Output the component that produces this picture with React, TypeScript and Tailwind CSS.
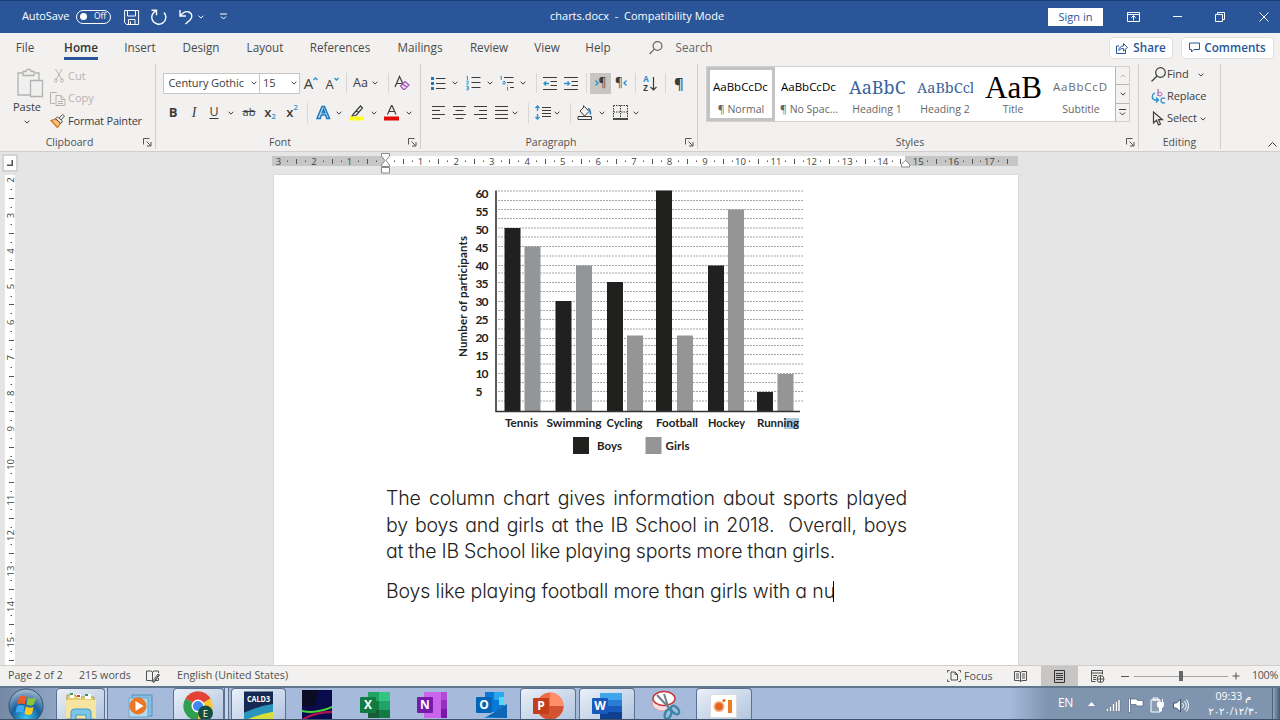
import clsx from "clsx";
import type { ReactNode } from "react";

interface IconProps {
  w?: number;
  h?: number;
  className?: string;
  children: ReactNode;
}

function Icon({ w = 16, h = 16, className, children }: IconProps) {
  return (
    <svg
      width={w}
      height={h}
      viewBox={`0 0 ${w} ${h}`}
      fill="none"
      stroke="currentColor"
      strokeWidth={1}
      className={clsx("shrink-0", className)}
    >
      {children}
    </svg>
  );
}

function Cell({ className, children }: { className: string; children: ReactNode }) {
  return (
    <span className={clsx("flex h-[21px] shrink-0 items-center justify-center", className)}>
      {children}
    </span>
  );
}

function Chevron({ className }: { className?: string }) {
  return (
    <Icon w={6} h={4} className={className}>
      <path d="M.6.7 3 3.1 5.4.7" />
    </Icon>
  );
}

function Divider({ className }: { className?: string }) {
  return (
    <span className={clsx("flex w-2 shrink-0 justify-center", className)}>
      <span className="h-5 w-px bg-[#d8d7d5]" />
    </span>
  );
}

function Launcher() {
  return (
    <Icon w={9} h={9} className="text-[#555]">
      <path d="M.5 6.5V.5h6M3.5 3.5l4 4M8 4v4H4" />
    </Icon>
  );
}

/* ---------- Title bar ---------- */

function TitleBar() {
  return (
    <header className="flex h-[33px] items-center border-t border-[#173f78] bg-[#2a5699] pb-px text-white">
      <span className="ml-[22px] w-[54px] text-[11px] tracking-[-0.1px]">AutoSave</span>
      <span className="flex h-[14px] w-[35px] items-center gap-[7px] rounded-full border border-white pl-[3px]">
        <span className="h-[7px] w-[7px] rounded-full bg-white" />
        <span className="text-[8.5px] leading-none">Off</span>
      </span>
      <Cell className="ml-[10px] w-[22px]">
        <Icon>
          <path d="M.6 1.5h14v14H2.5L.6 13.5zM3.5 1.5v5.5h8V1.5M4.5 15.5v-5h6.5v5M6.5 15.5v-3" />
        </Icon>
      </Cell>
      <Cell className="ml-[5px] w-[22px]">
        <Icon className="[stroke-width:1.4]">
          <path d="M.5 1.2h5v5M5.3 1.700A7 7 0 1 0 13 3.500" />
        </Icon>
      </Cell>
      <Cell className="ml-[5px] w-[22px]">
        <Icon className="[stroke-width:1.4]">
          <path d="M2 1v6h6M2.2 6.700C5 3.500 8 1.800 11 3c3.600 1.600 3.600 5.500 1 8l-4.500 4" />
        </Icon>
      </Cell>
      <Cell className="w-2">
        <Chevron />
      </Cell>
      <Cell className="ml-[13px] w-[10px]">
        <Icon w={7} h={7}>
          <path d="M0 1h7M1 3.5 3.5 6 6 3.5" />
        </Icon>
      </Cell>
      <span className="ml-[322px] w-[172px] text-center text-[11px] whitespace-pre">
        charts.docx  -  Compatibility Mode
      </span>
      <button className="ml-[326px] h-[18px] w-[55px] bg-white text-[11px] leading-[17px] text-[#2a5699]">
        Sign in
      </button>
      <Cell className="ml-[20px] w-5">
        <Icon w={13} h={10}>
          <path d="M.5.5h12v9H.5zM.5 2.5h12M6.5 8.5v-5M4.3 5.700l2.200-2.200 2.200 2.200" />
        </Icon>
      </Cell>
      <Cell className="ml-[24px] w-5">
        <span className="h-px w-[9px] bg-white" />
      </Cell>
      <Cell className="ml-[23px] w-5">
        <Icon w={10} h={10}>
          <path d="M.5 2.5h7v7h-7zM2.5 2.5v-2h7v7h-2" />
        </Icon>
      </Cell>
      <Cell className="ml-[24px] w-5">
        <Icon w={10} h={10}>
          <path d="m.5.5 9 9m0-9-9 9" />
        </Icon>
      </Cell>
    </header>
  );
}

/* ---------- Tabs ---------- */

const tabs = [
  { label: "File", width: "w-[50px]" },
  { label: "Home", width: "w-[62px]" },
  { label: "Insert", width: "w-[56px]" },
  { label: "Design", width: "w-[66px]" },
  { label: "Layout", width: "w-[62px]" },
  { label: "References", width: "w-[88px]" },
  { label: "Mailings", width: "w-[72px]" },
  { label: "Review", width: "w-[66px]" },
  { label: "View", width: "w-[50px]" },
  { label: "Help", width: "w-[52px]" },
];

function TabRow() {
  return (
    <nav className="flex h-[29px] items-center text-[11.7px] text-[#4a4a4a]">
      {tabs.map((tab) => (
        <span key={tab.label} className={clsx("flex shrink-0 justify-center", tab.width)}>
          <span
            className={clsx(
              "border-b-[3px] pt-[2px] leading-[20px]",
              tab.label === "Home" ? "border-[#2a5699] font-semibold text-[#333]" : "border-transparent"
            )}
          >
            {tab.label}
          </span>
        </span>
      ))}
      <Cell className="ml-4 w-8">
        <Icon w={14} h={14} className="text-[#666] [stroke-width:1.2]">
          <circle cx="8.5" cy="5" r="4.4" />
          <path d="M5.4 8.2.6 13" />
        </Icon>
      </Cell>
      <span className="w-[44px] text-center text-[#666]">Search</span>
      <button className="ml-[393px] flex h-[22px] w-[64px] items-center justify-center gap-[5px] rounded-sm border border-[#e1dfdd] bg-white font-semibold text-[#2a5699]">
        <Icon w={12} h={12}>
          <path d="M3 4H.5v7.500h9V8M2.800 8.500C3 5.500 4.800 4 7.500 4V1.500l4 4-4 3.500V6.500c-2 0-3.500.500-4.700 2z" />
        </Icon>
        Share
      </button>
      <button className="ml-[8px] flex h-[22px] w-[93px] items-center justify-center gap-[4px] rounded-sm border border-[#e1dfdd] bg-white font-semibold text-[#2a5699]">
        <Icon w={11} h={11}>
          <path d="M.5 1h10v6.500H5L2.500 10V7.500h-2z" />
        </Icon>
        Comments
      </button>
    </nav>
  );
}

/* ---------- Ribbon ---------- */

interface GroupProps {
  name: string;
  className: string;
  bodyClass?: string;
  launcher?: boolean;
  children: ReactNode;
}

function Group({ name, className, bodyClass, launcher, children }: GroupProps) {
  return (
    <section className={clsx("my-[2px] flex shrink-0 flex-col border-r border-[#cfcecc]", className)}>
      <div className={clsx("h-[73px]", bodyClass)}>{children}</div>
      <div className="flex h-[13px] items-center">
        <span className={clsx("flex-1 text-center text-[10.5px] text-[#505050]", launcher && "pr-1")}>{name}</span>
        {launcher && (
          <span className="w-3">
            <Launcher />
          </span>
        )}
      </div>
    </section>
  );
}

function ClipboardGroup() {
  return (
    <Group name="Clipboard" className="w-[156px]" launcher>
      <div className="flex">
        <div className="flex w-[54px] flex-col items-center pt-[4px] text-[11px]">
          <Icon w={28} h={31} className="ml-[5px] text-[#b2b2b2] [stroke-width:1.3]">
            <path d="M7 5H2v22h12M19 5h4v7M7 3.5h3c0-3 5-3 5 0h3v4H7zM14.500 12.500h12v16h-12z" fill="#f0f0ef" />
          </Icon>
          <span className="mt-px leading-[13px]">Paste</span>
          <Chevron className="mt-[7px]" />
        </div>
        <div className="flex flex-col pt-px text-[11px]">
          <div className="flex h-[22px] items-center text-[#b5b3b1]">
            <span className="w-[14px] shrink-0">
              <Icon w={10} h={14}>
                <path d="m1.5 0 6 10M8 0 2.5 10" />
                <circle cx="1.7" cy="11.5" r="1.5" />
                <circle cx="8" cy="11.5" r="1.5" />
              </Icon>
            </span>
            Cut
          </div>
          <div className="flex h-[23px] items-center text-[#b5b3b1]">
            <span className="-ml-[4px] w-[18px] shrink-0">
              <Icon w={16} h={14}>
                <path d="M5 11.5H.5V.5h6l1 1M6 3.5h5l4 4v6H6zM11 3.5v4h4M8 9.5h5M8 11.5h5" />
              </Icon>
            </span>
            Copy
          </div>
          <div className="flex h-[22px] items-center tracking-[-0.2px]">
            <span className="-ml-[4px] w-[18px] shrink-0">
              <Icon w={15} h={14}>
                <path d="M1 6.5 5.5 5l5 4-3 4.5z" fill="#f4c27c" stroke="#d8741a" strokeWidth="1.3" />
                <path d="m5.5 4.5 2-1.5 5 4-1.5 2.5zM9 4l3.5-3.5L14.5 2 11 6" stroke="#555" fill="#f3f2f1" />
              </Icon>
            </span>
            Format Painter
          </div>
        </div>
      </div>
    </Group>
  );
}

function FontGroup() {
  return (
    <Group name="Font" className="w-[265px]" bodyClass="pl-[7px]" launcher>
      <div className="flex h-[21px] items-center pt-[17px]">
        <Cell className="w-[97px] border border-[#c8c6c4] bg-white text-[11px]">
          <span className="w-[84px] pl-[2px] tracking-[-0.1px] whitespace-nowrap">Century Gothic</span>
          <Chevron />
        </Cell>
        <Cell className="-ml-px w-[41px] border border-[#c8c6c4] bg-white text-[11px]">
          <span className="w-[29px] pl-[1px]">15</span>
          <Chevron />
        </Cell>
        <Cell className="w-[22px]">
          <span className="text-[15px] leading-none">A</span>
          <Icon w={5} h={12} className="text-[#2b8fd0] [stroke-width:1.3]">
            <path d="M.5 3 2.5 1l2 2" />
          </Icon>
        </Cell>
        <Cell className="w-[20px]">
          <span className="mt-[2px] text-[13px] leading-none">A</span>
          <Icon w={5} h={12} className="text-[#2b8fd0] [stroke-width:1.3]">
            <path d="m.5 1 2 2 2-2" />
          </Icon>
        </Cell>
        <Divider />
        <Cell className="w-[21px] text-[12.5px]">Aa</Cell>
        <Cell className="w-[8px]">
          <Chevron />
        </Cell>
        <Divider className="ml-[5px]" />
        <Cell className="w-[20px]">
          <Icon w={16} h={16}>
            <path d="M1 12 5.500 1.500 9 9M2.800 8.500h5" strokeWidth="1.2" />
            <path d="m6.500 11 4.500-4.500 4 3.500-4.500 4.500H9.500zM8.500 9l4.500 3.500" fill="#f4e6f7" stroke="#9b4fb5" strokeWidth="1.2" />
          </Icon>
        </Cell>
      </div>
      <div className="mt-[17px] flex h-[21px] items-center">
        <Cell className="w-5 text-[13px] font-bold">B</Cell>
        <Cell className="w-[22px] font-['Liberation_Serif',serif] text-[14px] italic">I</Cell>
        <Cell className="w-[18px] text-[12.5px] underline underline-offset-2">U</Cell>
        <Cell className="w-4">
          <Chevron />
        </Cell>
        <Cell className="w-5 text-[11px] line-through">ab</Cell>
        <Cell className="w-[22px] text-[13px] font-semibold">
          x<span className="mt-[9px] text-[7.5px] font-semibold text-[#2b8fd0]">2</span>
        </Cell>
        <Cell className="w-[22px] text-[13px] font-semibold">
          x<span className="mb-[9px] text-[7.5px] font-semibold text-[#2b8fd0]">2</span>
        </Cell>
        <Divider className="w-1" />
        <Cell className="w-6">
          <Icon w={15} h={15}>
            <path
              d="M1 13.5 6 1.500h2.500l5 12h-2.700L9.600 10H5.400l-1.200 3.500zM6.300 7.700h2.400L7.500 4.500z"
              fill="#b8dcf5"
              stroke="#2079be"
              strokeWidth="1.5"
            />
          </Icon>
        </Cell>
        <Cell className="w-[7px]">
          <Chevron />
        </Cell>
        <Cell className="ml-[2px] w-[26px]">
          <Icon w={16} h={16}>
            <path d="M4 9.500 11.500 1l2 2L7 10.500l-4 .5zM7 5.500l3 2.500" strokeWidth="1.2" />
            <path d="M0 11.500h15v4H0z" fill="#ffff1e" stroke="none" />
          </Icon>
        </Cell>
        <Cell className="w-2">
          <Chevron />
        </Cell>
        <Cell className="w-7">
          <Icon w={16} h={16}>
            <path d="M3.500 9.500 7.500.5h.5l4 9M5 6.500h5.500" strokeWidth="1.2" />
            <path d="M0 11.500h15v4H0z" fill="#e00b0b" stroke="none" />
          </Icon>
        </Cell>
        <Cell className="w-[6px]">
          <Chevron />
        </Cell>
      </div>
    </Group>
  );
}

function Lines({ d }: { d: string }) {
  return (
    <Icon w={15} h={14}>
      <path d={d} />
    </Icon>
  );
}

function ParagraphGroup() {
  return (
    <Group name="Paragraph" className="w-[277px]" bodyClass="pl-[7px]" launcher>
      <div className="flex h-[21px] items-center pt-[17px]">
        <Cell className="w-[21px]">
          <Icon w={15} h={15}>
            <path d="M5 2.500h9.500M5 7.500h9.500M5 12.500h9.500" />
            <path d="M0 1h3v3H0zM0 6h3v3H0zM0 11h3v3H0z" fill="#2079be" stroke="none" />
          </Icon>
        </Cell>
        <Cell className="w-3">
          <Chevron />
        </Cell>
        <Cell className="w-6">
          <Icon w={15} h={16}>
            <path d="M5.500 2.500h9M5.500 7.500h9M5.500 12.500h9" />
            <path d="M.5 1.500h1V5M.3 6.200h2v1.300L.5 9h2M.3 11.300h2v3.500h-2M.8 13h1.500" stroke="#2b8fd0" />
          </Icon>
        </Cell>
        <Cell className="w-[10px]">
          <Chevron />
        </Cell>
        <Cell className="w-6">
          <Icon w={15} h={16}>
            <path d="M4 2.500h9.500M7 7.500h6.500M10 12.500h4" />
            <path d="M.3 1.500h1V5M3 6.500h2V9H3V7.500M7.500 10v.7M7.500 12v3.500" stroke="#2b8fd0" />
          </Icon>
        </Cell>
        <Cell className="w-2">
          <Chevron />
        </Cell>
        <Divider className="ml-[5px]" />
        <Cell className="w-5">
          <Icon w={14} h={13}>
            <path d="M0 .5h14M7.500 4.500H14M7.500 8.500H14M0 12.500h14" />
            <path d="M6 6.500H1M3 4.500l-2 2 2 2" stroke="#2b8fd0" strokeWidth="1.3" />
          </Icon>
        </Cell>
        <Cell className="w-[22px]">
          <Icon w={14} h={13}>
            <path d="M0 .5h14M7.500 4.500H14M7.500 8.500H14M0 12.500h14" />
            <path d="M0 6.500h5M3.500 4.500l2 2-2 2" stroke="#2b8fd0" strokeWidth="1.3" />
          </Icon>
        </Cell>
        <Divider />
        <Cell className="w-[21px] bg-[#c8c6c4] text-[12px]">
          <Icon w={4} h={6} className="text-[#2b8fd0] [stroke-width:1.4]">
            <path d="m.5.5 2.500 2.500L.5 5.500" />
          </Icon>
          ¶
        </Cell>
        <Cell className="w-5 text-[12px]">
          ¶
          <Icon w={4} h={6} className="text-[#2b8fd0] [stroke-width:1.4]">
            <path d="M3.500.500 1 3l2.500 2.500" />
          </Icon>
        </Cell>
        <Divider />
        <Cell className="w-[22px]">
          <span className="flex flex-col text-[8px] leading-[9px] font-bold">
            <span className="h-[9px] text-[#2b8fd0]">A</span>
            <span className="h-[9px]">Z</span>
          </span>
          <Icon w={8} h={15}>
            <path d="M4.500 1v13M1.500 11l3 3 3-3" strokeWidth="1.2" />
          </Icon>
        </Cell>
        <Divider />
        <Cell className="w-5 text-[15px] font-semibold">¶</Cell>
      </div>
      <div className="mt-[17px] flex h-[21px] items-center">
        <Cell className="w-[21px]">
          <Lines d="M1 .5h13M1 4.500h8M1 8.500h13M1 12.500h8" />
        </Cell>
        <Cell className="w-[21px]">
          <Lines d="M1 .5h13M3.500 4.500h8M1 8.500h13M3.500 12.500h8" />
        </Cell>
        <Cell className="w-[21px]">
          <Lines d="M1 .5h13M6 4.500h8M1 8.500h13M6 12.500h8" />
        </Cell>
        <Cell className="w-5">
          <Lines d="M1 .5h13M1 4.500h13M1 8.500h13M1 12.500h13" />
        </Cell>
        <Cell className="w-2">
          <Chevron />
        </Cell>
        <Divider className="ml-[5px]" />
        <Cell className="w-[22px]">
          <Icon w={16} h={15}>
            <path d="M7 2.500h9M7 5.500h9M7 8.500h9M7 11.500h9" />
            <path d="M2.500 1v5M2.500 9v5M.5 3l2-2 2 2M.5 12l2 2 2-2" stroke="#2b8fd0" strokeWidth="1.3" />
          </Icon>
        </Cell>
        <Cell className="w-[6px]">
          <Chevron />
        </Cell>
        <Divider className="ml-[6px]" />
        <Cell className="w-[22px]">
          <Icon w={16} h={16}>
            <path d="M3 6 7.500 1.500l4.500 5L7.500 11zM6.500 3V.5M1 11.500h13.500v3H1z" />
            <path d="M11 3.500c2 .5 2.500 2.500 2.500 6" stroke="#2079be" strokeWidth="1.5" />
          </Icon>
        </Cell>
        <Cell className="w-3">
          <Chevron />
        </Cell>
        <Cell className="w-6">
          <Icon w={15} h={15}>
            <path d="M.5.5h14M.5.5v13M14.500.5v13M7.500.5v13M.5 7h14" strokeDasharray="1.500 1" />
            <path d="M0 14h15" strokeWidth="1.6" stroke="#222" />
          </Icon>
        </Cell>
        <Cell className="w-2">
          <Chevron />
        </Cell>
      </div>
    </Group>
  );
}

const styles = [
  { name: "¶ Normal", sample: "AaBbCcDc", look: "text-[11.5px] text-black" },
  { name: "¶ No Spac...", sample: "AaBbCcDc", look: "text-[11.5px] text-black" },
  { name: "Heading 1", sample: "AaBbC", look: "font-['Noto_Serif','DejaVu_Serif',serif] text-[18px] text-[#3a639c]" },
  { name: "Heading 2", sample: "AaBbCcl", look: "font-['Noto_Serif','DejaVu_Serif',serif] text-[14.5px] text-[#3a639c]" },
  { name: "Title", sample: "AaB", look: "font-['Liberation_Serif',serif] text-[31px] text-black" },
  { name: "Subtitle", sample: "AaBbCcD", look: "text-[11.5px] tracking-[0.8px] text-[#6a6a6a]" },
];

function StylesGroup() {
  return (
    <Group name="Styles" className="w-[441px]" bodyClass="pl-2" launcher>
      <div className="flex h-[58px] w-[424px] pt-[2px]">
        <div className="flex flex-1 border border-[#d2d0ce] bg-white">
          {styles.map((style, i) => (
            <div
              key={style.name}
              className={clsx(
                "flex w-[68px] shrink-0 flex-col items-center border-[3px] pt-[5px]",
                i === 0 ? "border-[#c3c3c3]" : "border-transparent"
              )}
            >
              <div className="flex h-[24px] w-[56px] items-center overflow-hidden">
                <span className={clsx("leading-none whitespace-nowrap", style.look)}>{style.sample}</span>
              </div>
              <span className="mt-[4px] text-[10.5px] leading-[13px] whitespace-nowrap text-[#666]">
                {style.name}
              </span>
            </div>
          ))}
          <div className="flex flex-1 flex-col divide-y divide-[#b8b6b4] border-l border-[#b8b6b4] bg-[#f3f2f1]">
            <span className="flex flex-1 items-center justify-center text-[#b5b5b5]">
              <Chevron className="rotate-180" />
            </span>
            <span className="flex flex-1 items-center justify-center">
              <Chevron />
            </span>
            <span className="flex flex-1 items-center justify-center">
              <Icon w={7} h={7}>
                <path d="M0 .5h7M1 3.500 3.500 6 6 3.500" />
              </Icon>
            </span>
          </div>
        </div>
      </div>
    </Group>
  );
}

function EditingGroup() {
  return (
    <Group name="Editing" className="w-[82px]">
      <div className="flex flex-col text-[11px] tracking-[-0.1px]">
        <div className="flex h-[21px] items-center">
          <Cell className="ml-[10px] w-[18px]">
            <Icon w={15} h={15} className="[stroke-width:1.2]">
              <circle cx="9.500" cy="5.500" r="4.800" />
              <path d="M6 9 .5 14.500" />
            </Icon>
          </Cell>
          <span className="w-[31px]">Find</span>
          <Chevron className="mt-px" />
        </div>
        <div className="flex h-[22px] items-center">
          <Cell className="ml-[10px] w-[18px]">
            <Icon w={15} h={15}>
              <path d="M7 0v7M7 4.500c2-2.500 4.500-.5 3.800 1.200C10 7.500 8 7.300 7 6" stroke="#9b4fb5" />
              <path
                d="M14 9.500c-3-1.500-4.500.5-4 2.500s2.500 2.500 4 1.500M4 4C.5 5 .5 10 3.500 11H7M5 8.500 7.500 11 5 13.500"
                stroke="#2b8fd0"
                strokeWidth="1.3"
              />
            </Icon>
          </Cell>
          Replace
        </div>
        <div className="flex h-[22px] items-center">
          <Cell className="ml-[10px] w-[18px]">
            <Icon w={12} h={15} className="[stroke-width:1.2]">
              <path d="M1.500 1v11l3-2.700L6.500 14l2-1-2-4.300h4z" />
            </Icon>
          </Cell>
          Select
          <Chevron className="mt-px ml-[3px]" />
        </div>
      </div>
    </Group>
  );
}

function Ribbon() {
  return (
    <div className="flex h-[90px] border-b border-[#d0cfcd] text-[#3c3c3c]">
      <ClipboardGroup />
      <FontGroup />
      <ParagraphGroup />
      <StylesGroup />
      <EditingGroup />
      <div className="flex flex-1 items-end justify-end pr-[3px] pb-[4px]">
        <Icon w={9} h={5}>
          <path d="m.5 4.500 4-4 4 4" />
        </Icon>
      </div>
    </div>
  );
}

/* ---------- Rulers ---------- */

const CM = 35.55;

function HorizontalRuler() {
  const quarters = Array.from({ length: 83 }, (_, i) => i - 12);
  return (
    <svg width="746" height="22" viewBox="272 153 746 22" className="ml-[254px] shrink-0">
      <rect x="272" y="157" width="746" height="10" fill="#c6c6c6" />
      <rect x="385" y="157" width="520" height="10" fill="#fff" />
      {quarters.map((q) => {
        const x = 385 + (q * CM) / 4;
        if (q === 0 || q === 59 || x > 1016) return null;
        if (q % 4 === 0) {
          return (
            <text key={q} x={x} y="165.5" fontSize="9.5" textAnchor="middle" fill="#444">
              {Math.abs(q / 4)}
            </text>
          );
        }
        const half = q % 2 === 0;
        return <rect key={q} x={Math.round(x)} y={half ? 160 : 161.5} width="1" height={half ? 5 : 1.5} fill="#555" />;
      })}
      <path
        d="M381.500 154.500h8v2.500l-3.500 4.500 3.500 4.500v1.500h-8v-1.500l3.500-4.500-3.500-4.500zM381.500 168.500h8v5.500h-8zM901.500 168v-3l4-3.500 4 3.500v3z"
        fill="#fff"
        stroke="#888"
      />
    </svg>
  );
}

function VerticalRuler() {
  const quarters = Array.from({ length: 55 }, (_, i) => i);
  return (
    <svg width="18" height="490" viewBox="0 175 18 490" className="shrink-0">
      <rect x="5" y="175" width="10" height="490" fill="#fff" />
      {quarters.map((q) => {
        const y = 180 + (q * CM) / 4;
        if (q % 4 === 0) {
          return (
            <text key={q} transform={`translate(14 ${y}) rotate(-90)`} fontSize="9.5" textAnchor="middle" fill="#444">
              {q / 4 + 2}
            </text>
          );
        }
        const half = q % 2 === 0;
        return <rect key={q} x={half ? 9 : 10.5} y={Math.round(y)} width={half ? 5 : 1.5} height="1" fill="#555" />;
      })}
    </svg>
  );
}

/* ---------- Document ---------- */

const gridLines = [
  191, 200.5, 209.5, 218.5, 228, 237, 246.5, 256, 265.5, 273, 282.5, 291.5, 301.5, 310.5, 319.5, 329, 338.5, 345.5,
  354.5, 364, 373.5, 382.5, 391.5, 401,
];

const axisLabels = [60, 55, 50, 45, 40, 35, 30, 25, 20, 15, 10, 5];

// boys/girls hold the top left corner of each column
const sports = [
  { name: "Tennis", labelX: 505, labelW: 33, boys: [504.5, 228], girls: [524.5, 246.5] },
  { name: "Swimming", labelX: 546.5, labelW: 55, boys: [555.5, 301], girls: [576, 265.5] },
  { name: "Cycling", labelX: 606.5, labelW: 36, boys: [607, 282], girls: [627, 335.5] },
  { name: "Football", labelX: 656, labelW: 42, boys: [656, 190.5], girls: [677, 335.5] },
  { name: "Hockey", labelX: 708, labelW: 37, boys: [708, 265.5], girls: [728, 209.5] },
  { name: "Running", labelX: 757, labelW: 42, boys: [757, 392], girls: [777.5, 374] },
];

function ColumnChart() {
  return (
    <svg
      width="380"
      height="280"
      viewBox="440 180 380 280"
      fill="#222"
      className="ml-[166px] shrink-0 font-[Lato,sans-serif] font-bold"
    >
      {gridLines.map((y) => (
        <path key={y} d={`M498 ${y}H803`} stroke="#a5a5a5" strokeDasharray="2 1" strokeWidth="1" />
      ))}
      {axisLabels.map((n, i) => (
        <text key={n} x="475.5" y={198.2 + i * 18} fontSize="12" textLength={n === 5 ? 6.5 : 13}>
          {n}
        </text>
      ))}
      <text transform="translate(467 357) rotate(-90)" fontSize="11.5" textLength="121">
        Number of participants
      </text>
      <rect x="784" y="418" width="15" height="11" fill="#a9c6de" />
      {sports.map((s) => (
        <g key={s.name}>
          <rect x={s.boys[0]} y={s.boys[1]} width="16" height={411 - s.boys[1]} fill="#20201f" />
          <rect x={s.girls[0]} y={s.girls[1]} width="16" height={411 - s.girls[1]} fill="#949597" />
          <text x={s.labelX} y="427" fontSize="11.5" textLength={s.labelW} lengthAdjust="spacingAndGlyphs">
            {s.name}
          </text>
        </g>
      ))}
      <path d="M496 190.500V411.500H800" fill="none" stroke="#333" strokeWidth="1.6" />
      <rect x="573" y="437" width="16" height="17" fill="#20201f" />
      <rect x="645.5" y="437" width="16" height="17" fill="#949597" />
      <text x="597" y="450" fontSize="11.5" textLength="25">
        Boys
      </text>
      <text x="665.5" y="450" fontSize="11.5" textLength="24">
        Girls
      </text>
    </svg>
  );
}

function Line({ className, children }: { className: string; children: ReactNode }) {
  return <span className={clsx("block whitespace-pre-wrap [text-align-last:justify]", className)}>{children}</span>;
}

function Page() {
  return (
    <main className="ml-[256px] flex w-[744px] shrink-0 flex-col bg-white pt-[5px] shadow-[0_0_1px_#aaa]">
      <ColumnChart />
      <div className="ml-[112px] pt-[25px] font-[Inter,'Century_Gothic',sans-serif] text-[19.5px] leading-[26.7px] font-light tracking-[-0.15px] text-[#222] [font-feature-settings:'cv11'] [word-spacing:-1.5px]">
        <p>
          <Line className="w-[521px]">The column chart gives information about sports played</Line>
          <Line className="w-[521px]">by boys and girls at the IB School in 2018.  Overall, boys</Line>
          <Line className="w-[449px]">at the IB School like playing sports more than girls.</Line>
        </p>
        <p className="mt-[13px] flex items-center">
          <Line className="w-[449px]">Boys like playing football more than girls with a nu</Line>
          <span className="-ml-[2px] h-[21px] w-px bg-black" />
        </p>
      </div>
    </main>
  );
}

/* ---------- Status bar ---------- */

function StatusBar() {
  return (
    <div className="flex h-[21px] shrink-0 items-center border-t border-[#cfcecc] bg-[#f2f1ef] text-[10.7px] whitespace-nowrap text-[#505050]">
      <span className="ml-2 w-[71px] pb-[2px]">Page 2 of 2</span>
      <span className="w-[67px] pb-[2px]">215 words</span>
      <Icon w={14} h={13} className="mr-[17px]">
        <path d="M6.500 11.500V2L5 1H.5v9.500H5zM6.500 2 8 1h4.500v2M7.500 12.500l5.500-8M6.500 11.500l5.500-7.500 1.500 1-5.500 7.500zM9 10.500h3.500V8" />
      </Icon>
      <span className="w-[770px] pb-[2px]">English (United States)</span>
      <Icon w={14} h={12} className="mr-[3px]">
        <path d="M2.500.5h-2v2M.5 9.500v2h2M11.500.5h2v2M13.500 9.500v2h-2M4 2h4l2.500 2.500V10H4zM8 2v2.500h2.500" />
      </Icon>
      <span className="w-[50px]">Focus</span>
      <Icon w={13} h={12}>
        <path d="M.5 1.500H5l1.500 1L8 1.500h4.500v9H8l-1.500 1-1.500-1H.5zM6.500 2.500v9M2 4h3M2 6h3M2 8h3M8 4h3M8 6h3M8 8h3" />
      </Icon>
      <span className="ml-[14px] flex h-full w-[37px] items-center justify-center bg-[#c8c6c4]">
        <Icon w={11} h={13} className="text-[#333]">
          <path d="M.5.5h10v12H.5zM2 3.500h7M2 5.500h7M2 7.500h7M2 9.500h7" />
        </Icon>
      </span>
      <Icon w={14} h={13} className="ml-[13px]">
        <path d="M4.500 11.500h-4V.5h11v4M.5 3h11M2 5.500h4M2 7.500h3M2 9.500h3" />
        <circle cx="9.500" cy="9" r="3.500" />
        <path d="M6 9h7M9.500 5.500v7" />
      </Icon>
      <span className="ml-[16px] h-px w-[8px] bg-[#555]" />
      <span className="ml-[5px] flex h-[9px] w-[94px] items-center">
        <span className="h-px w-[45px] bg-[#a5a5a5]" />
        <span className="h-[10px] w-[4px] bg-[#666]" />
        <span className="h-px flex-1 bg-[#a5a5a5]" />
      </span>
      <Icon w={8} h={8} className="ml-[4px]">
        <path d="M4 .5v7M.5 4h7" />
      </Icon>
      <span className="ml-[12px] pb-[2px] tracking-[-0.3px]">100%</span>
    </div>
  );
}

/* ---------- Taskbar ---------- */

function OfficeIcon({ letter, badge, children }: { letter: string; badge: string; children: ReactNode }) {
  return (
    <svg width="31" height="30" viewBox="0 0 31 30" className="mt-[3px] shrink-0">
      {children}
      <rect x="0" y="7" width="16" height="16" rx="1" fill={badge} />
      <text x="8" y="19" fontSize="12" fontWeight="700" textAnchor="middle" fill="#fff">
        {letter}
      </text>
    </svg>
  );
}

function TaskButton({ className, active, children }: { className: string; active?: boolean; children: ReactNode }) {
  return (
    <span
      className={clsx(
        "flex h-full shrink-0 items-center justify-center overflow-hidden",
        active && "rounded-t-sm border-x border-t border-[#5c7190] bg-linear-to-br from-[#e9f0f8] to-[#b3c5df]",
        className
      )}
    >
      {children}
    </span>
  );
}

function Taskbar() {
  return (
    <footer className="flex h-[34px] shrink-0 overflow-hidden border-t-2 border-b border-[#5f7590] border-b-[#3f526c] bg-[#a6bbdc] text-white">
      <TaskButton className="w-[56px] bg-linear-to-r from-[#7489a5] to-[#90a5c4] pr-[5px]">
        <svg width="36" height="36" viewBox="0 0 36 36" className="mt-[4px] shrink-0">
          <defs>
            <radialGradient id="orb" cx="50%" cy="85%" r="85%">
              <stop offset="0" stopColor="#36c5f0" />
              <stop offset=".5" stopColor="#17609c" />
              <stop offset="1" stopColor="#aebfd0" />
            </radialGradient>
          </defs>
          <circle cx="18" cy="18" r="17" fill="url(#orb)" stroke="#31506f" />
          <path d="M11 9c3-2 5-1.500 7.500 0l-1.700 7.500c-2-1.500-5-1.500-7.500 0z" fill="#ee5a24" />
          <path d="M20 9.500c3 1.500 5 1.500 8-.5l-2 7.500c-2 1.500-5 1.500-7.700 0z" fill="#8cc63f" />
          <path d="M9 18c3-1.500 5-1.500 7.500 0L15 25c-2-1.500-5-1.500-7.500 0z" fill="#3fa9f5" />
          <path d="M18 18.500c3 1.500 5 1.500 7.500.5L24 26c-3 1.500-5 1-7.500-.5z" fill="#ffc81e" />
        </svg>
      </TaskButton>
      <TaskButton className="w-[49px]" active>
        <svg width="32" height="30" viewBox="0 0 32 30" className="mt-[4px] shrink-0">
          <path d="M2 4h8l2 2h17v21H2z" fill="#e7cf78" stroke="#b99a43" />
          <path d="M5 2h4v5H5zM12 3h4v4h-4zM20 3h6v5h-6z" fill="#fff" />
          <path d="M5 2h3v2H5zM20 3h3v2h-3z" fill="#3c9a46" />
          <path d="M12 4h3v2h-3z" fill="#d9402c" />
          <path d="M1 9h30v18H1z" fill="#f5e5a1" />
          <path d="M6 30V21q0-3 4-3h12q4 0 4 3v9h-5v-6H11v6z" fill="#7cc5e8" stroke="#459dc7" />
        </svg>
      </TaskButton>
      <span className="w-[3px] border-r border-[#5c7190] bg-[#c6d5e9]" />
      <TaskButton className="mx-[4px] w-[57px]">
        <svg width="26" height="26" viewBox="0 0 26 26" className="mt-[4px] shrink-0">
          <path d="M4 2h20v21H4z" fill="#87bde0" stroke="#5590bb" />
          <path d="M1 5h19v19H1z" fill="#b4daf0" stroke="#6aa6cd" />
          <circle cx="10" cy="13" r="8.5" fill="#ee7522" />
          <path d="m7.5 8 8 5-8 5z" fill="#fff" />
        </svg>
      </TaskButton>
      <TaskButton className="w-[51px]" active>
        <svg width="31" height="30" viewBox="0 0 31 30" className="mt-[3px] shrink-0">
          <path d="M15 15 2.500 7.500a14.500 14.500 0 0 1 25 0z" fill="#e24335" />
          <path d="M15 15 27.500 7.500A14.500 14.500 0 0 1 15 29.500z" fill="#fcc934" />
          <path d="M15 15v14.500A14.500 14.500 0 0 1 2.500 7.500z" fill="#2ea04f" />
          <circle cx="15" cy="15" r="6.5" fill="#fff" />
          <circle cx="15" cy="15" r="5" fill="#4285f4" />
          <circle cx="22.5" cy="22" r="7.5" fill="#124f42" />
          <text x="22.5" y="25.5" fontSize="9.5" textAnchor="middle" fill="#fff">
            E
          </text>
        </svg>
      </TaskButton>
      <span className="w-[5px] border-x border-[#5c7190] bg-[#c6d5e9]" />
      <TaskButton className="ml-[2px] w-[55px]" active>
        <svg width="29" height="29" viewBox="0 0 30 29" className="mt-[2px] shrink-0">
          <path d="M0 0h30v29H0z" fill="#152a52" />
          <path d="M0 22Q15 15 30 13v16H0z" fill="#2a94bd" />
          <path d="M3 29Q14 24 30 21v8z" fill="#d8df3d" />
          <text
            x="15"
            y="10.5"
            fontSize="9.5"
            fontWeight="700"
            textAnchor="middle"
            textLength="24"
            lengthAdjust="spacingAndGlyphs"
            fill="#fff"
          >
            CALD3
          </text>
        </svg>
      </TaskButton>
      <TaskButton className="w-[61px]">
        <svg width="30" height="30" viewBox="0 0 30 30" className="mt-[2px] shrink-0">
          <path d="M0 0h30v30H0z" fill="#090b4c" />
          <path d="M0 0h17l-4 16H0z" fill="#0b0b25" />
          <path d="M0 21q15 3 30-4" stroke="#43dc35" strokeWidth="2" fill="none" />
          <path d="M0 30q12-8 30-8" stroke="#a71455" strokeWidth="2.5" fill="none" />
        </svg>
      </TaskButton>
      <TaskButton className="w-[56px]">
        <OfficeIcon letter="X" badge="#117c41">
          <path d="M8 2h22v26H8z" fill="#21a366" />
          <path d="M19 2h11v9H19z" fill="#33c481" />
          <path d="M8 11h11v9H8zM19 20h11v8H19z" fill="#107c41" />
          <path d="M8 20h11v8H8z" fill="#185c37" />
        </OfficeIcon>
      </TaskButton>
      <TaskButton className="w-[59px]">
        <OfficeIcon letter="N" badge="#7719aa">
          <path d="M7 2h23v26H7z" fill="#ca64ea" />
          <path d="M24 10h6v9h-6z" fill="#9332bf" />
          <path d="M24 19h6v9h-6z" fill="#7719aa" />
          <path d="M24 2h6v8h-6z" fill="#ae4bd5" />
        </OfficeIcon>
      </TaskButton>
      <TaskButton className="w-[58px]">
        <OfficeIcon letter="O" badge="#0364b8">
          <path d="M9 2h19v20H9z" fill="#0a78d4" />
          <path d="M18 2h10v8H18z" fill="#28a8ea" />
          <path d="M23 7h5v8h-5z" fill="#50d9ff" />
          <path d="M8 28h23V14l-12 8z" fill="#1490df" />
          <path d="m31 14-20 13 20 1z" fill="#1066b5" />
        </OfficeIcon>
      </TaskButton>
      <TaskButton className="w-[56px]" active>
        <OfficeIcon letter="P" badge="#c43e1c">
          <circle cx="17" cy="15" r="13.5" fill="#ed6c47" />
          <path d="M17 1.500A13.500 13.500 0 0 1 30.500 15H17z" fill="#ff8f6b" />
          <path d="M3.500 15h27a13.500 13.500 0 0 1-27 0z" fill="#d35230" />
        </OfficeIcon>
      </TaskButton>
      <TaskButton className="ml-[3px] w-[56px]" active>
        <OfficeIcon letter="W" badge="#185abd">
          <path d="M8 2h22v7H8z" fill="#41a5ee" />
          <path d="M8 9h22v7H8z" fill="#2b7cd3" />
          <path d="M8 15h22v7H8z" fill="#185abd" />
          <path d="M8 21h22v7H8z" fill="#103f91" />
        </OfficeIcon>
      </TaskButton>
      <TaskButton className="w-[61px]">
        <svg width="30" height="30" viewBox="0 0 30 30" className="mt-[2px] shrink-0">
          <ellipse cx="12" cy="13" rx="11" ry="8" fill="#f6dddd" stroke="#c9a3a8" />
          <ellipse cx="13" cy="8.5" rx="11" ry="7" fill="#fff" stroke="#c2343a" strokeWidth="1.5" />
          <path d="m6 5 13 14M13 4l5 15" stroke="#6e7e8d" strokeWidth="2" />
          <ellipse cx="17" cy="24" rx="3" ry="5" fill="none" stroke="#3c86a8" strokeWidth="2.5" transform="rotate(20 17 24)" />
          <ellipse cx="24" cy="20" rx="3" ry="5" fill="none" stroke="#3c86a8" strokeWidth="2.5" transform="rotate(-45 24 20)" />
        </svg>
      </TaskButton>
      <TaskButton className="w-[56px]" active>
        <svg width="27" height="24" viewBox="0 0 27 24" className="mt-[3px] mr-[2px] shrink-0">
          <path d="M.5.5h26v23H.5z" fill="#fff" stroke="#dcdcdc" />
          <circle cx="9" cy="12.5" r="5.5" fill="#f3b28a" />
          <circle cx="9" cy="12.5" r="3.8" fill="#e8631a" />
          <circle cx="14" cy="6.5" r="1.5" fill="#e8631a" />
          <path d="M18 6h4v13h-4z" fill="#f07a20" />
        </svg>
      </TaskButton>
      <div className="ml-auto flex w-[270px] items-center bg-linear-to-r from-[#a6bbdc] to-[#7f94af] to-[14%] pl-[48px]">
        <span className="w-[27px] pb-[2px] text-[12px] tracking-[-0.5px]">EN</span>
        <Icon w={32} h={16} className="[stroke:none]">
          <path d="m3 10 3.500-4L10 10z" fill="#fff" />
        </Icon>
        <Icon w={84} h={18} className="-ml-[12px] text-[#44566c]">
          <path
            d="M1.500 13.500h2v3h-2zM4.500 11.500h2v5h-2zM7.500 8.500h2v8h-2zM10.500 6.500h2v10h-2zM13 4.500h2v12h-2z"
            fill="#fff"
            strokeWidth=".4"
          />
          <path d="M23.500 3.500h2v14h-2zM25.500 4h6l1 1.500H38V11h-6l-1-1.500h-5.500z" fill="#fff" strokeWidth=".6" />
          <path d="M46 5h9v12h-9zM48 3h5v2h-5z" fill="#8c9db2" stroke="#fff" />
          <path d="M52.500 7.500h6v3q-.5 2-2 2.500v3h-2v-3q-1.500-.5-2-2.500zM54 4v4M57.500 4v4" fill="#fff" stroke="#fff" />
          <path d="M68.500 8h3l4-4v13l-4-4h-3z" fill="#fff" />
          <path d="M77.500 8q2 2.500 0 5M79.500 6q3.500 4.500 0 9M81.500 4.500q4 6 0 12" stroke="#fff" />
        </Icon>
        <div className="flex-1 pt-px pl-[12px] text-center font-['Open_Sans','DejaVu_Sans',sans-serif] leading-[15px]">
          <div className="text-[10.5px] tracking-[-0.4px]">
            <bdo dir="ltr">09:33 م</bdo>
          </div>
          <div className="text-[10px] tracking-[0.3px]">
            <bdo dir="ltr">٢٠٢٠/١٢/٣٠</bdo>
          </div>
        </div>
        <span className="ml-[6px] h-full w-2 border-l border-[#4f627d] bg-linear-to-r from-[#93a6bf] to-[#465a75]" />
      </div>
    </footer>
  );
}

export default function App() {
  return (
    <div className="flex h-[720px] w-[1280px] flex-col overflow-hidden bg-[#f2f1ef] font-['Open_Sans','Noto_Sans',sans-serif]">
      <TitleBar />
      <TabRow />
      <Ribbon />
      <div className="flex min-h-0 flex-1 flex-col bg-[#e5e5e5]">
        <div className="flex h-[23px] shrink-0 items-start">
          <span className="mt-[2px] ml-[2px] flex h-[18px] w-[16px] items-center justify-center border-2 border-[#d2d2d2] bg-white">
            <Icon w={6} h={6} className="text-[#555] [stroke-width:1.6]">
              <path d="M0 5.200h5.200V0" />
            </Icon>
          </span>
          <HorizontalRuler />
        </div>
        <div className="flex min-h-0 flex-1">
          <VerticalRuler />
          <Page />
        </div>
      </div>
      <StatusBar />
      <Taskbar />
    </div>
  );
}
